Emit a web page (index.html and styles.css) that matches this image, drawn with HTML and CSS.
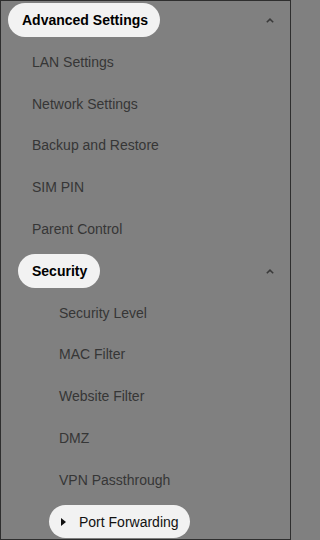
FILE: index.html
```html
<!DOCTYPE html>
<html lang="en">
<head>
<meta charset="utf-8">
<title>Advanced Settings</title>
<link rel="stylesheet" href="styles.css">
</head>
<body>
<div class="frame">
  <ul class="menu">
    <li class="row">
      <span class="pill bold lvl0">Advanced Settings</span>
      <svg class="caret" width="8" height="5" viewBox="0 0 8 5"><polyline points="0.8,4.3 4,1.2 7.2,4.3" fill="none" stroke="#3a3a3a" stroke-width="1.6"/></svg>
    </li>
    <li class="row"><span class="item lvl1">LAN Settings</span></li>
    <li class="row"><span class="item lvl1">Network Settings</span></li>
    <li class="row"><span class="item lvl1">Backup and Restore</span></li>
    <li class="row"><span class="item lvl1">SIM PIN</span></li>
    <li class="row"><span class="item lvl1">Parent Control</span></li>
    <li class="row">
      <span class="pill bold lvl1p">Security</span>
      <svg class="caret" width="8" height="5" viewBox="0 0 8 5"><polyline points="0.8,4.3 4,1.2 7.2,4.3" fill="none" stroke="#3a3a3a" stroke-width="1.6"/></svg>
    </li>
    <li class="row"><span class="item lvl2">Security Level</span></li>
    <li class="row"><span class="item lvl2">MAC Filter</span></li>
    <li class="row"><span class="item lvl2">Website Filter</span></li>
    <li class="row"><span class="item lvl2">DMZ</span></li>
    <li class="row"><span class="item lvl2">VPN Passthrough</span></li>
    <li class="row">
      <span class="pill active lvl2p"><span class="tri"></span>Port Forwarding</span>
    </li>
  </ul>
</div>
</body>
</html>
```
FILE: styles.css
```css
html, body {
  margin: 0;
  padding: 0;
  background: #808080;
}
.frame {
  box-sizing: border-box;
  width: 291px;
  height: 540px;
  border: 1px solid #2e2e2e;
  background: #808080;
  overflow: hidden;
  font-family: "Liberation Sans", Arial, sans-serif;
  font-size: 14px;
}
.menu {
  list-style: none;
  margin: 0;
  padding: 2.3px 0 0 0;
  display: flex;
  flex-direction: column;
  gap: 8.43px;
}
.row {
  height: 33.4px;
  display: flex;
  align-items: center;
  position: relative;
}
.item {
  color: #363636;
}
.lvl1 { margin-left: 31px; }
.lvl2 { margin-left: 58px; }
.pill {
  height: 33.4px;
  display: inline-flex;
  align-items: center;
  background: #f2f2f2;
  border-radius: 17px;
  color: #000;
  box-sizing: border-box;
}
.bold { font-weight: bold; }
.lvl0 { margin-left: 7px; padding: 0 12px 0 14px; }
.lvl1p { margin-left: 17px; padding: 0 13px 0 14px; }
.lvl2p { margin-left: 48px; padding: 0 11px 0 12px; color: #111; }
.tri {
  width: 0;
  height: 0;
  border-top: 4px solid transparent;
  border-bottom: 4px solid transparent;
  border-left: 5px solid #111;
  margin-right: 13px;
}
.caret {
  margin-left: auto;
  margin-right: 16px;
  margin-top: 1px;
}
```
